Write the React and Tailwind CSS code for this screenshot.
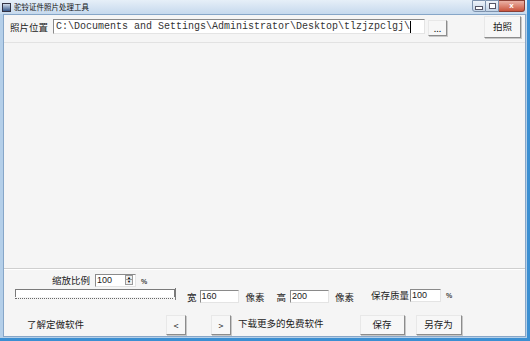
import { useState } from 'react';

const cjk = { fontFamily: '"Noto Sans CJK SC", "Liberation Sans", sans-serif' };
const mono = { fontFamily: '"Liberation Mono", monospace' };
const sans = { fontFamily: '"Liberation Sans", sans-serif' };

function Btn({ children, className = '' }) {
  return (
    <button
      style={cjk}
      className={`flex shrink-0 items-center justify-center border border-t-[#e8e8e8] border-l-[#e8e8e8] border-r-[#8c8c8c] border-b-[#8c8c8c] bg-[#f7f7f7] text-[9.5px] leading-none text-[#222] shadow-[1px_1px_0_#c8c8c8] ${className}`}
    >
      {children}
    </button>
  );
}

function Field({ value, className = '' }) {
  return (
    <div
      style={sans}
      className={`flex shrink-0 items-start border border-t-[#8a8a8a] border-l-[#8a8a8a] border-r-[#e4e4e4] border-b-[#e4e4e4] bg-white pl-[1px] text-[9px] leading-[10px] text-[#222] ${className}`}
    >
      {value}
    </div>
  );
}

function Label({ children, className = '' }) {
  return (
    <span style={cjk} className={`shrink-0 text-[9.5px] leading-none text-[#222] ${className}`}>
      {children}
    </span>
  );
}

export default function App() {
  const [path] = useState('C:\\Documents and Settings\\Administrator\\Desktop\\tlzjzpclgj\\');

  return (
    <div className="flex h-[341px] w-[530px] flex-col overflow-hidden border-b-[3px] border-r-[3px] border-[#3b8fd2] bg-[#b4cfe9]">
      {/* title bar */}
      <div className="flex h-[14px] shrink-0 items-center bg-gradient-to-b from-[#e6eff8] to-[#c6d9ed] pl-[2px]">
        <div className="mr-[3px] h-[9px] w-[9px] border border-[#334] bg-gradient-to-b from-[#d0dcea] to-[#3a5a8a]" />
        <span style={cjk} className="text-[7.5px] leading-none text-[#111]">驼铃证件照片处理工具</span>
        <div className="ml-auto flex h-[13px] items-start self-start pr-[2px]">
          <div className="flex h-[12px] w-[14px] items-center justify-center rounded-bl-[3px] border border-[#7d92ad] bg-gradient-to-b from-[#eef3f9] to-[#c4d4e6]">
            <div className="mt-[4px] h-[2px] w-[6px] bg-white shadow-[0_0_0_1px_#556]" />
          </div>
          <div className="flex h-[12px] w-[13px] items-center justify-center border border-l-0 border-[#7d92ad] bg-gradient-to-b from-[#eef3f9] to-[#c4d4e6]">
            <div className="h-[6px] w-[7px] border border-[#556] bg-white" />
          </div>
          <div className="flex h-[12px] w-[26px] items-center justify-center rounded-br-[3px] border border-l-0 border-[#8a3f35] bg-gradient-to-b from-[#eab2a6] to-[#c9533c]">
            <span style={sans} className="text-[8px] font-bold leading-none text-white">x</span>
          </div>
        </div>
      </div>

      {/* client area */}
      <div className="mb-[1px] ml-[3px] mr-[1px] flex flex-1 flex-col border border-[#86a6c8] bg-[#f5f5f5]">
        {/* top row */}
        <div className="flex h-[27px] shrink-0 items-start pl-[6px] pr-[4px]">
          <Label className="mt-[8px]">照片位置</Label>
          <div
            style={mono}
            className="ml-[5px] mt-[4px] flex h-[15px] w-[372px] shrink-0 items-center border border-t-[#8a8a8a] border-l-[#8a8a8a] border-r-[#e4e4e4] border-b-[#e4e4e4] bg-white pl-[2px] text-[10px] leading-none text-[#333]"
          >
            {path}
            <span className="h-[12px] w-[1px] bg-black" />
          </div>
          <Btn className="ml-[3px] mt-[5px] h-[16px] w-[19px] text-[9px]">...</Btn>
          <Btn className="ml-auto mt-[1px] h-[22px] w-[37px]">拍照</Btn>
        </div>

        {/* picture area */}
        <div className="flex-1 border-t border-[#e2e2e2] bg-[#f5f5f5]" />
        <div className="h-[2px] shrink-0 border-t border-[#cfcfcf] bg-white" />

        {/* controls */}
        <div className="flex h-[35px] shrink-0">
          <div className="flex w-[176px] shrink-0 flex-col pl-[11px] pt-[4px]">
            <div className="flex h-[13px] items-center pl-[37px]">
              <Label>缩放比例</Label>
              <div className="ml-[5px] flex h-[13px] w-[41px] border border-t-[#8a8a8a] border-l-[#8a8a8a] border-r-[#e4e4e4] border-b-[#e4e4e4] bg-white">
                <span style={sans} className="pl-[1px] text-[9px] leading-[10px] text-[#222]">100</span>
                <div className="ml-auto mr-[2px] flex w-[8px] flex-col">
                  <div className="flex h-[5px] items-center justify-center border border-[#9a9a9a] bg-[#eee] text-[4px] leading-none">▲</div>
                  <div className="flex h-[5px] items-center justify-center border border-t-0 border-[#9a9a9a] bg-[#eee] text-[4px] leading-none">▼</div>
                </div>
              </div>
              <span style={sans} className="ml-[5px] mt-[2px] text-[7px] font-bold leading-none text-[#444]">%</span>
            </div>
            <div className="relative mt-[2px] h-[8px] w-[160px] border border-b-0 border-[#7a7a7a] bg-white">
              <div className="absolute -right-[2px] -top-[2px] h-[12px] w-[1px] bg-[#7a7a7a]" />
            </div>
            <div className="mt-[1px] h-[1px] w-[158px] border-t border-dotted border-[#666]" />
          </div>
          <div className="flex items-start pt-[20px]">
            <Label className="ml-[7px] mt-[3px]">宽</Label>
            <Field value="160" className="ml-[3px] h-[13px] w-[39px]" />
            <Label className="ml-[7px] mt-[3px]">像素</Label>
            <Label className="ml-[12px] mt-[3px]">高</Label>
            <Field value="200" className="ml-[4px] h-[13px] w-[39px]" />
            <Label className="ml-[6px] mt-[3px]">像素</Label>
            <Label className="ml-[17px] mt-[1px]">保存质量</Label>
            <Field value="100" className="-mt-[1px] ml-[1px] h-[13px] w-[31px]" />
            <span style={sans} className="ml-[5px] mt-[2px] text-[7px] font-bold leading-none text-[#444]">%</span>
          </div>
        </div>

        {/* bottom row */}
        <div className="flex h-[31px] shrink-0 items-start pl-[23px] pt-[10px]">
          <Label className="mt-[5px] w-[139px]">了解定做软件</Label>
          <Btn className="h-[20px] w-[20px] text-[9px]">&lt;</Btn>
          <Btn className="ml-[25px] h-[20px] w-[20px] text-[9px]">&gt;</Btn>
          <Label className="ml-[7px] mt-[4px]">下载更多的免费软件</Label>
          <Btn className="ml-[36px] h-[20px] w-[45px]">保存</Btn>
          <Btn className="ml-[11px] h-[20px] w-[46px]">另存为</Btn>
        </div>
      </div>
    </div>
  );
}
